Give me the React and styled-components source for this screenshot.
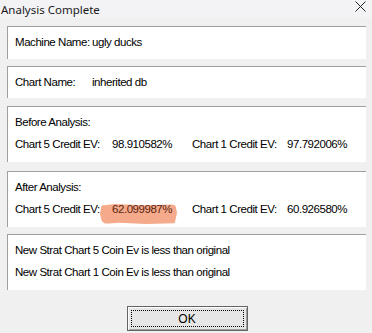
import React from 'react';
import styled, { createGlobalStyle } from 'styled-components';

const GlobalStyle = createGlobalStyle`
  html, body {
    margin: 0;
    padding: 0;
    background: #f0f0f0;
  }
`;

const Window = styled.div`
  width: 372px;
  height: 333px;
  background: #f0f0f0;
  font-family: 'Liberation Sans', Arial, sans-serif;
  font-size: 11.5px;
  letter-spacing: -0.45px;
  color: #000;
  display: flex;
  flex-direction: column;
  overflow: hidden;
`;

const TitleBar = styled.div`
  height: 18px;
  display: flex;
  align-items: center;
  justify-content: space-between;
  padding: 0 6px 0 1px;
  background: #f3f3f5;
  font-family: 'Noto Sans', 'Open Sans', sans-serif;
  font-size: 11.5px;
  letter-spacing: 0;
  color: #1a1a1a;
`;

const CloseIcon = styled.svg`
  width: 11px;
  height: 11px;
  margin-top: -6px;
`;

const Body = styled.div`
  display: flex;
  flex-direction: column;
  padding: 8px 6px 0 7px;
`;

const Panel = styled.div`
  background: #fff;
  border-top: 1px solid #a0a0a0;
  border-left: 1px solid #a0a0a0;
  padding: 4px 8px ${(p) => p.$bottom || 7}px 7px;
  margin-bottom: ${(p) => p.$gap || 7}px;
`;

const Line = styled.div`
  height: 22px;
  line-height: 22px;
  white-space: nowrap;
`;

const Pair = styled.div`
  display: grid;
  grid-template-columns: 77px auto;
  height: 22px;
  line-height: 22px;
  white-space: nowrap;
`;

const EvRow = styled.div`
  position: relative;
  z-index: 0;
  display: grid;
  grid-template-columns: 97px 80px 95px auto;
  height: 22px;
  line-height: 22px;
  white-space: nowrap;
`;

const Marked = styled.span`
  position: relative;
  color: #5a2410;

  &::before {
    content: '';
    position: absolute;
    z-index: -1;
    left: -12px;
    width: 77px;
    top: 1px;
    height: 20px;
    background: #f5ab8b;
    border-radius: 3px 6px 4px 8px;
    clip-path: polygon(2% 8%, 20% 0, 55% 6%, 98% 2%, 100% 45%, 97% 96%, 60% 100%, 25% 94%, 3% 100%, 0 50%);
  }
`;

const Footer = styled.div`
  display: flex;
  justify-content: center;
  padding: 9px 0 0 2px;
`;

const Button = styled.button`
  width: 121px;
  height: 25px;
  padding: 0;
  background: #e6e6e6;
  border: 1px solid #646464;
  box-shadow: inset 1px 1px 0 #fff, inset -1px -1px 0 #a0a0a0;
  font-family: 'Liberation Sans', Arial, sans-serif;
  font-size: 12px;
  color: #000;
  display: flex;
  align-items: stretch;
`;

const Focus = styled.span`
  flex: 1;
  margin: 3px;
  border: 1px dotted #000;
  display: flex;
  align-items: center;
  justify-content: center;
`;

function EvLine({ left, right, marked }) {
  return (
    <EvRow>
      <span>Chart 5 Credit EV:</span>
      <span>{marked ? <Marked>{left}</Marked> : left}</span>
      <span>Chart 1 Credit EV:</span>
      <span>{right}</span>
    </EvRow>
  );
}

export default function App() {
  return (
    <Window>
      <GlobalStyle />
      <TitleBar>
        <span>Analysis Complete</span>
        <CloseIcon viewBox="0 0 11 11">
          <path d="M0.5 0.5 L10.5 10.5 M10.5 0.5 L0.5 10.5" stroke="#222" strokeWidth="1" />
        </CloseIcon>
      </TitleBar>
      <Body>
        <Panel $bottom={6} $gap={7}>
          <Pair>
            <span>Machine Name:</span>
            <span>ugly ducks</span>
          </Pair>
        </Panel>
        <Panel $bottom={5} $gap={8}>
          <Pair>
            <span>Chart Name:</span>
            <span>inherited db</span>
          </Pair>
        </Panel>
        <Panel $gap={9}>
          <Line>Before Analysis:</Line>
          <EvLine left="98.910582%" right="97.792006%" />
        </Panel>
        <Panel $gap={7}>
          <Line>After Analysis:</Line>
          <EvLine left="62.099987%" right="60.926580%" marked />
        </Panel>
        <Panel>
          <Line>New Strat Chart 5 Coin Ev is less than original</Line>
          <Line>New Strat Chart 1 Coin Ev is less than original</Line>
        </Panel>
      </Body>
      <Footer>
        <Button>
          <Focus>OK</Focus>
        </Button>
      </Footer>
    </Window>
  );
}
